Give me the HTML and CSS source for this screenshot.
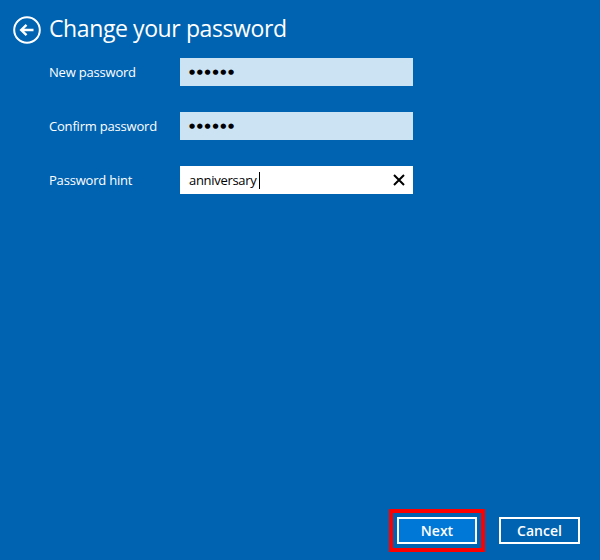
FILE: index.html
```html
<!DOCTYPE html>
<html lang="en">
<head>
<meta charset="utf-8">
<title>Change your password</title>
<link rel="stylesheet" href="styles.css">
</head>
<body>
<main class="page">
  <header class="header">
    <button class="back" type="button" aria-label="Back">
      <svg width="28" height="28" viewBox="0 0 28 28" fill="none" stroke="#fff">
        <circle cx="14" cy="14" r="12.8" stroke-width="2"/>
        <path d="M20.5 14H8.5M13.5 8.8L8.2 14l5.3 5.2" stroke-width="2.4" stroke-linecap="butt" stroke-linejoin="miter"/>
      </svg>
    </button>
    <h1 class="title">Change your password</h1>
  </header>

  <form class="form">
    <label class="label" for="np">New password</label>
    <div class="field filled" id="np"><span class="dots">●●●●●●</span></div>

    <label class="label" for="cp">Confirm password</label>
    <div class="field filled" id="cp"><span class="dots">●●●●●●</span></div>

    <label class="label" for="ph">Password hint</label>
    <div class="field active" id="ph">
      <span class="hint">anniversary</span><span class="caret"></span>
      <svg class="clear" width="12" height="12" viewBox="0 0 12 12" stroke="#000" stroke-width="2">
        <path d="M1 1L11 11M11 1L1 11"/>
      </svg>
    </div>
  </form>

  <footer class="actions">
    <button class="btn primary" type="button">Next</button>
    <button class="btn" type="button">Cancel</button>
  </footer>
</main>
</body>
</html>
```

FILE: styles.css
```css
html, body {
  margin: 0;
  padding: 0;
}
body {
  background: #0063b1;
  font-family: "Open Sans", "Noto Sans", "Liberation Sans", sans-serif;
  color: #fff;
}
.page {
  height: 560px;
  box-sizing: border-box;
  display: flex;
  flex-direction: column;
}
.header {
  display: flex;
  align-items: center;
  padding: 16px 0 0 13px;
  gap: 8px;
  height: 28px;
}
.back {
  width: 28px;
  height: 28px;
  padding: 0;
  border: 0;
  background: none;
  display: block;
}
.back svg { display: block; }
.title {
  margin: -4px 0 0 0;
  font-size: 23px;
  font-weight: 400;
  letter-spacing: -0.4px;
  line-height: 28px;
}
.form {
  display: grid;
  grid-template-columns: 131px 233px;
  grid-auto-rows: 28px;
  row-gap: 26px;
  padding: 14px 0 0 49px;
  align-items: center;
}
.label {
  font-size: 13px;
  letter-spacing: -0.2px;
  line-height: 16px;
}
.field {
  height: 28px;
  box-sizing: border-box;
  display: flex;
  align-items: center;
  padding-left: 9px;
  color: #000;
}
.filled { background: #cce3f4; }
.active { background: #fff; }
.dots {
  font-family: "DejaVu Sans", sans-serif;
  font-size: 7px;
  letter-spacing: 1.7px;
}
.hint {
  font-size: 13px;
  letter-spacing: -0.3px;
}
.caret {
  width: 1px;
  height: 17px;
  background: #000;
  margin-left: 2px;
}
.clear {
  margin-left: auto;
  margin-right: 8px;
}
.actions {
  margin-top: auto;
  display: flex;
  justify-content: flex-end;
  gap: 22px;
  padding: 0 20px 16px 0;
}
.btn {
  width: 81px;
  height: 27px;
  box-sizing: border-box;
  border: 2px solid #fff;
  background: transparent;
  color: #fff;
  font-family: inherit;
  font-size: 14px;
  font-weight: 600;
  padding: 0;
}
.primary {
  width: 80px;
  background: #0078d7;
  outline: 4px solid #ff0000;
  outline-offset: 4px;
}
```
